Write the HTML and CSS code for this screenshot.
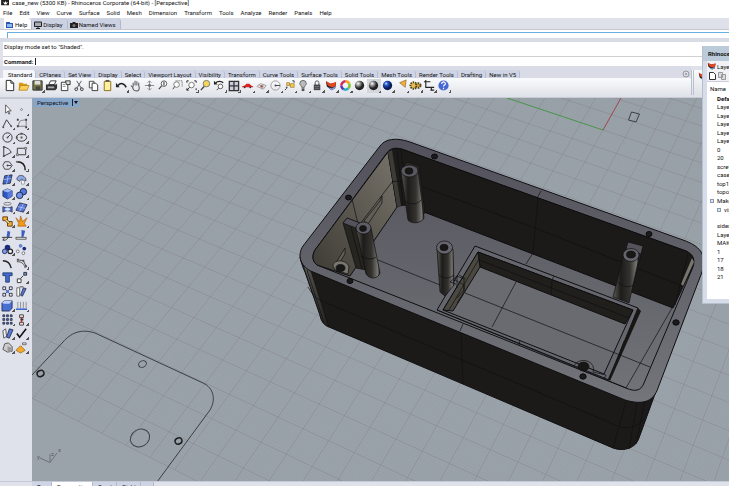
FILE: index.html
```html
<!DOCTYPE html>
<html lang="en">
<head>
    <meta charset="UTF-8">
    <meta name="viewport" content="width=device-width, initial-scale=1.0">
    <title>case_new - Rhinoceros Corporate</title>
    <link rel="stylesheet" href="styles.css">
</head>
<body>
<div class="app">
    <header class="titlebar">
        <svg class="logo" viewBox="0 0 10 8"><path d="M0 0h9v6H0z" fill="#222"/><path d="M2 2l2 1 1-2 1 2 2-1-2 3H4z" fill="#fff"/></svg>
        <span>case_new (5300 KB) - Rhinoceros Corporate (64-bit) - [Perspective]</span>
    </header>
    <nav class="menu">
        <a href="#">File</a><a href="#">Edit</a><a href="#">View</a><a href="#">Curve</a><a href="#">Surface</a><a href="#">Solid</a><a href="#">Mesh</a><a href="#">Dimension</a><a href="#">Transform</a><a href="#">Tools</a><a href="#">Analyze</a><a href="#">Render</a><a href="#">Panels</a><a href="#">Help</a>
    </nav>

    <div class="dock-tabs">
        <button class="dock-tab active"><svg viewBox="0 0 8 8"><path d="M0 1h7v6H0z" fill="#2c55b5"/><path d="M1 3h5v3H1z" fill="#8db7f0"/><path d="M4 1h3v1H4z" fill="#fff"/></svg>Help</button>
        <button class="dock-tab"><svg viewBox="0 0 8 8"><path d="M.5 1h7v4.500h-7z" fill="#aab" stroke="#222"/><path d="M2 7.500h4M4 5v2" stroke="#222"/></svg>Display</button>
        <button class="dock-tab"><svg viewBox="0 0 8 8"><path d="M0 2h2l1-1h2l1 1h2v5H0z" fill="#222"/><circle cx="4" cy="4.500" r="1.500" fill="#777"/></svg>Named Views</button>
    </div>
    <div class="help-pane"><div class="help-box"></div></div>

    <div class="history">Display mode set to "Shaded".</div>
    <div class="command">
        <label for="cmd">Command:</label>
        <span class="caret"></span>
        <input type="text" id="cmd">
    </div>

    <div class="tools">
    <div class="tools-main">
    <div class="tool-tabs">
        <button class="tool-tab active">Standard</button>
        <button class="tool-tab">CPlanes</button>
        <button class="tool-tab">Set View</button>
        <button class="tool-tab">Display</button>
        <button class="tool-tab">Select</button>
        <button class="tool-tab">Viewport Layout</button>
        <button class="tool-tab">Visibility</button>
        <button class="tool-tab">Transform</button>
        <button class="tool-tab">Curve Tools</button>
        <button class="tool-tab">Surface Tools</button>
        <button class="tool-tab">Solid Tools</button>
        <button class="tool-tab">Mesh Tools</button>
        <button class="tool-tab">Render Tools</button>
        <button class="tool-tab">Drafting</button>
        <button class="tool-tab">New in V5</button>
        <button class="gear" aria-label="Options"><svg viewBox="0 0 8 8"><circle cx="4" cy="4" r="3" fill="none" stroke="#999"/><circle cx="4" cy="4" r="1" fill="#999"/></svg></button>
    </div>
    <div class="toolbar">
        <button aria-label="New"><svg viewBox="0 0 14 14"><path d="M3.500 1.500h5l3 3v8h-8zM8.500 1.500v3h3" fill="#fff" stroke="#222"/></svg></button>
        <button aria-label="Open"><svg viewBox="0 0 14 14"><path d="M2 4h4l1 1h4v7H2z" fill="#d99a14"/><path d="M4 7h9l-2 5H2z" fill="#ffd057" stroke="#9a6a10" stroke-width=".6"/></svg></button>
        <button class="flyout" aria-label="Save"><svg viewBox="0 0 14 14"><path d="M2 2h10v10H2z" fill="#777745" stroke="#333"/><path d="M4 2h6v4H4z" fill="#ddd"/><path d="M5 8h5v4H5z" fill="#444"/></svg></button>
        <button aria-label="Print"><svg viewBox="0 0 14 14"><path d="M4 6l2-4h6l-2 4z" fill="#fff" stroke="#333"/><path d="M1 6h11l1-1v5l-2 2H1z" fill="#333"/><path d="M3 8h7v2H3z" fill="#aaa"/></svg></button>
        <button aria-label="Properties"><svg viewBox="0 0 14 14"><path d="M2.500 3.500h7v9h-7z" fill="#fff" stroke="#333"/><path d="M7 2h5v4H8z" fill="#ddd" stroke="#333"/><path d="M4 6h3M4 8h3" stroke="#888"/></svg></button>
        <button aria-label="Cut"><svg viewBox="0 0 14 14"><path d="M4 2l5 8M9 2l-5 8" stroke="#555" fill="none"/><circle cx="3.500" cy="11" r="1.500" fill="none" stroke="#333"/><circle cx="9.500" cy="11" r="1.500" fill="none" stroke="#333"/></svg></button>
        <button aria-label="Copy"><svg viewBox="0 0 14 14"><path d="M2.500 2.500h5v7h-5z" fill="#fff" stroke="#444"/><path d="M5.500 4.500h4l2 2v6h-6z" fill="#fff" stroke="#333"/></svg></button>
        <button aria-label="Paste"><svg viewBox="0 0 14 14"><path d="M3.500 2.500h7v10h-7z" fill="#fff0a0" stroke="#8b6d14"/><path d="M5 1h4v2H5z" fill="#555"/></svg></button>
        <button class="flyout" aria-label="Undo"><svg viewBox="0 0 14 14"><path d="M3 7c3-3 7-3 9 2" stroke="#222" stroke-width="1.600" fill="none"/><path d="M1 4v5h4z" fill="#222"/></svg></button>
        <button aria-label="Pan"><svg viewBox="0 0 14 14"><path d="M4.500 8V4M6.500 7V2M8.500 7V2.500M10.500 8V4M4 9L2 7M4 8c0 3 1 5 4 5s3-2 3-5" stroke="#555" stroke-width="1.100" fill="none"/></svg></button>
        <button aria-label="Rotate view"><svg viewBox="0 0 14 14"><path d="M7 2v10M2 7h10M5 4l2-2 2 2M5 10l2 2 2-2" stroke="#888" fill="none"/><circle cx="7" cy="7" r="1.500" fill="#666"/></svg></button>
        <button aria-label="Zoom"><svg viewBox="0 0 14 14"><circle cx="7.500" cy="5" r="3" fill="#fff" stroke="#555"/><path d="M5 7.500L2 11M7.500 3v4" stroke="#444" stroke-width="1.200"/></svg></button>
        <button aria-label="Zoom window"><svg viewBox="0 0 14 14"><circle cx="6" cy="6" r="3" fill="#fff" stroke="#777"/><path d="M4 8l-2 3" stroke="#444"/><path d="M5 2h7v7" stroke="#444" stroke-dasharray="1 1" fill="none"/></svg></button>
        <button class="flyout" aria-label="Zoom extents"><svg viewBox="0 0 14 14"><circle cx="7" cy="6.500" r="3" fill="#fff" stroke="#777"/><path d="M2 4V2h2M10 2h2v2M12 10v2M2 10v2h2M5 9l-3 3" stroke="#222" fill="none"/></svg></button>
        <button aria-label="Zoom selected"><svg viewBox="0 0 14 14"><circle cx="8" cy="5" r="3.500" fill="#f4d65a" stroke="#777"/><path d="M5.500 8L2 12" stroke="#444" stroke-width="1.500"/></svg></button>
        <button class="flyout" aria-label="Undo view"><svg viewBox="0 0 14 14"><path d="M3 4c2-2 6-2 8 0" stroke="#222" stroke-width="1.500" fill="none"/><path d="M1 2v4h4z" fill="#222"/><circle cx="8" cy="8" r="2.500" fill="#fff" stroke="#555"/><path d="M6 10l-2 2" stroke="#333"/></svg></button>
        <button class="flyout" aria-label="Four views"><svg viewBox="0 0 14 14"><path d="M2.500 2.500h10v10h-10zM7.500 2v10M2 7.500h10" fill="#ccd" stroke="#333" stroke-width="1.400"/></svg></button>
        <button class="flyout" aria-label="Car view"><svg viewBox="0 0 14 14"><path d="M1 8l3-1 2-2h3l2 2 2 1v1H1z" fill="#d22"/><circle cx="4" cy="9" r="1" fill="#333"/><circle cx="10" cy="9" r="1" fill="#333"/></svg></button>
        <button class="flyout" aria-label="Set CPlane"><svg viewBox="0 0 14 14"><path d="M2 8l4-3 6 2-3 4zM4 6l6 3M7 11l2-5" fill="none" stroke="#999"/><circle cx="7" cy="8" r="1.200" fill="#b33"/></svg></button>
        <button class="flyout" aria-label="Object snap"><svg viewBox="0 0 14 14"><circle cx="7" cy="7" r="5" fill="none" stroke="#999"/><path d="M7 7h5" stroke="#444"/><circle cx="7" cy="7" r="1" fill="#444"/></svg></button>
        <button class="flyout" aria-label="Select"><svg viewBox="0 0 14 14"><path d="M4 4h3v3H4zM8 5h4v4H8z" fill="#f7cf4a" stroke="#96702a" stroke-width=".7"/><path d="M10 2h2v2M4 10l-2 2" stroke="#333" fill="none"/><circle cx="4" cy="9" r="1" fill="#555"/></svg></button>
        <button class="flyout" aria-label="Hide"><svg viewBox="0 0 14 14"><path d="M5 9c0-2-2-2-2-4a3.500 3.500 0 0 1 7 0c0 2-2 2-2 4z" fill="#bbb" stroke="#666"/><path d="M5 10h3v3H5z" fill="#555"/></svg></button>
        <button class="flyout" aria-label="Lock"><svg viewBox="0 0 14 14"><path d="M4.500 7V4a2 2 0 0 1 4 0v3" fill="none" stroke="#555"/><path d="M3 6h7v6H3z" fill="#444"/><path d="M4 8h5M4 10h5" stroke="#999" stroke-width=".6"/></svg></button>
        <button class="flyout" aria-label="Layers"><svg viewBox="0 0 14 14"><path d="M1 3l5 2 6-1-1 6-4 2-5-4z" fill="#222"/><path d="M1 2l5 3 6-2-1 5-4 1-4-2z" fill="#e6451e"/><path d="M3 9l4 1 4-2v2l-4 2z" fill="#7b93cf"/></svg></button>
        <button class="flyout" aria-label="Color"><svg viewBox="0 0 14 14"><g fill="none" stroke-width="2.600"><path d="M7 2.500a4.500 4.500 0 0 1 4 2.500" stroke="#f3a51b"/><path d="M11 5a4.500 4.500 0 0 1-1 5" stroke="#77c92e"/><path d="M10 10a4.500 4.500 0 0 1-5 1" stroke="#23a9c9"/><path d="M5 11a4.500 4.500 0 0 1-2.500-4" stroke="#5735b5"/><path d="M2.500 7A4.500 4.500 0 0 1 7 2.500" stroke="#d3255c"/></g></svg></button>
        <button aria-label="Shade"><svg viewBox="0 0 14 14"><circle cx="7" cy="7" r="5" fill="url(#ball)"/></svg></button>
        <button class="flyout pressed" aria-label="Shaded viewport"><svg viewBox="0 0 14 14"><circle cx="7" cy="7" r="5" fill="url(#ball)"/></svg></button>
        <button class="flyout" aria-label="Render"><svg viewBox="0 0 14 14"><circle cx="7" cy="7" r="5" fill="url(#blueball)"/></svg></button>
        <button class="flyout" aria-label="Spotlight"><svg viewBox="0 0 14 14"><path d="M5 4l7-3-1 8z" fill="#f2ad3c" stroke="#8a6730" stroke-width=".7"/></svg></button>
        <button class="flyout" aria-label="Options"><svg viewBox="0 0 14 14"><circle cx="5" cy="7" r="3.500" fill="#e1bd51" stroke="#4d421f" stroke-dasharray="1.500 1" stroke-width="2"/><circle cx="10" cy="7" r="2.500" fill="#d1a532" stroke="#4d421f" stroke-dasharray="1.500 1" stroke-width="2"/></svg></button>
        <button class="flyout" aria-label="Dimension"><svg viewBox="0 0 14 14"><path d="M3 3h5M3 3v6h6v3M1 3h3M3 1v3M9 9h3M8 12h4" fill="none" stroke="#222" stroke-width="1.200"/></svg></button>
        <button class="flyout" aria-label="Help"><svg viewBox="0 0 14 14"><circle cx="7" cy="7" r="5.500" fill="#4767d2"/><path d="M5 5.500c0-3 4-3 4-.5 0 1.500-2 1.500-2 3M7 9.500v1.500" fill="none" stroke="#fff" stroke-width="1.300"/></svg></button>
    </div>
    </div>
    <div class="tools-extra">
        <button aria-label="Layer tools"><svg viewBox="0 0 14 14"><path d="M1 3l5 2 6-1-1 6-4 2-5-4z" fill="#222"/><path d="M1 2l5 3 6-2-1 5-4 1-4-2z" fill="#e6451e"/><path d="M3 9l4 1 4-2v2l-4 2z" fill="#7b93cf"/></svg></button>
    </div>
    </div>

    <main class="work">
        <aside class="side">
            <button aria-label="Pointer"><svg viewBox="0 0 14 14"><path d="M5 2v9l2-2 1.500 3 1-.5L8 8.500h3z" fill="#fff" stroke="#333" stroke-width=".8"/></svg></button>
            <button class="flyout" aria-label="Point"><svg viewBox="0 0 14 14"><circle cx="7" cy="7" r="1" fill="#fff" stroke="#555" stroke-width=".7"/></svg></button>
            <button class="flyout" aria-label="Polyline"><svg viewBox="0 0 14 14"><path d="M2 11l4-8 5 7" fill="none" stroke="#333"/><circle cx="2.500" cy="11" r="1" fill="#555"/><circle cx="11" cy="10" r="1" fill="#555"/></svg></button>
            <button class="flyout" aria-label="Curve"><svg viewBox="0 0 14 14"><path d="M3 10c3-6 0-6 9-7M3 10h8M12 3v8" fill="none" stroke="#666" stroke-width=".8"/><path d="M2 2h2v2H2zM11 2h2v2h-2zM2 9h2v2H2zM11 10h2v2h-2z" fill="#444"/></svg></button>
            <button class="flyout" aria-label="Circle"><svg viewBox="0 0 14 14"><circle cx="7" cy="7" r="5" fill="none" stroke="#333"/><path d="M7 7l3-3" stroke="#333"/><circle cx="7" cy="7" r="1" fill="#555"/></svg></button>
            <button class="flyout" aria-label="Ellipse"><svg viewBox="0 0 14 14"><ellipse cx="7" cy="7" rx="5.500" ry="4" fill="none" stroke="#333"/><path d="M6 2h2v2H6zM6 6h2v2H6zM1 6h2v2H1z" fill="#555"/></svg></button>
            <button class="flyout" aria-label="Arc"><svg viewBox="0 0 14 14"><path d="M3 12V2c4 1 7 3 8 6l-8 4" fill="none" stroke="#333"/><path d="M2 1h2v2H2zM2 11h2v2H2z" fill="#555"/></svg></button>
            <button class="flyout" aria-label="Rectangle"><svg viewBox="0 0 14 14"><path d="M2.500 3.500h9v7h-9z" fill="none" stroke="#333"/><path d="M1.500 9.500h2v2h-2zM10.500 2.500h2v2h-2z" fill="#eee" stroke="#444" stroke-width=".7"/></svg></button>
            <button class="flyout" aria-label="Polygon"><svg viewBox="0 0 14 14"><path d="M4 3h5l3 4-3 4H4L2 7z" fill="none" stroke="#444"/><path d="M7 7h4" stroke="#444"/><circle cx="7" cy="7" r="1" fill="#444"/></svg></button>
            <button class="flyout" aria-label="Fillet"><svg viewBox="0 0 14 14"><path d="M2 3c6 0 9 3 9 9" fill="none" stroke="#222" stroke-width="1.600"/><path d="M1 2h2v2H1z" fill="#777"/></svg></button>
            <button class="flyout" aria-label="Surface"><svg viewBox="0 0 14 14"><path d="M4 3l8-1-2 9-8 1z" fill="#3f65c8" stroke="#223" stroke-width=".8"/><path d="M3 7l8-1M8 2L6 12" stroke="#cdd9ff" stroke-width=".7"/></svg></button>
            <button class="flyout" aria-label="Sweep"><svg viewBox="0 0 14 14"><path d="M2 7c0-6 9-6 10 1l-3 1c0-3-3-3-4 0z" fill="#8da9e7" stroke="#334" stroke-width=".8"/><path d="M7 8h3v4H7z" fill="#fff" stroke="#667" stroke-width=".6"/></svg></button>
            <button class="flyout" aria-label="Box"><svg viewBox="0 0 14 14"><path d="M2 4l5-2 5 2v6l-5 3-5-3z" fill="#2d55c4" stroke="#1b2447" stroke-width=".7"/><path d="M2 4l5-2 5 2-5 2z" fill="#9cb6f5"/><path d="M7 6l5-2v6l-5 3z" fill="#5578da"/></svg></button>
            <button class="flyout" aria-label="Boolean union"><svg viewBox="0 0 14 14"><circle cx="9" cy="5" r="3.500" fill="#5578da" stroke="#1b2447"/><circle cx="5" cy="9" r="3.500" fill="#6f91e8" stroke="#1b2447"/></svg></button>
            <button class="flyout" aria-label="Project"><svg viewBox="0 0 14 14"><path d="M2 6c3 2 7 2 10 0v6c-3-2-7-2-10 0z" fill="#4a70d3" stroke="#223" stroke-width=".7"/><ellipse cx="7" cy="3" rx="4" ry="1.500" fill="none" stroke="#777"/><ellipse cx="7" cy="9" rx="3" ry="1.500" fill="#dce5ff"/></svg></button>
            <button class="flyout" aria-label="Mesh"><svg viewBox="0 0 14 14"><path d="M5 2l8 2-4 8-8-2z" fill="#5578da" stroke="#223" stroke-width=".8"/><path d="M3 6l8 2M9 3l-4 8" stroke="#cdd9ff" stroke-width=".7"/></svg></button>
            <button class="flyout" aria-label="Join"><svg viewBox="0 0 14 14"><path d="M2 2h5v4H2zM7 7h5v5H7z" fill="#f3b233" stroke="#63400c"/><path d="M5 5l4 4" stroke="#63400c" stroke-width="3"/><path d="M5 5l4 4" stroke="#f3d79a" stroke-width="1.500"/></svg></button>
            <button class="flyout" aria-label="Explode"><svg viewBox="0 0 14 14"><path d="M1 3l4 4 1-6 2 6 5-4-3 6 2 3H3l1-3z" fill="#f19a1c" stroke="#a55b0b" stroke-width=".7"/></svg></button>
            <button aria-label="Trim"><svg viewBox="0 0 14 14"><path d="M7 2l3 1-1 6H6z" fill="#3b5fc0"/><path d="M1 9h11M4 9l-2 3h3l3-3" fill="none" stroke="#333"/></svg></button>
            <button aria-label="Split"><svg viewBox="0 0 14 14"><path d="M7 1l4 1-2 7H7z" fill="#3b5fc0"/><path d="M1 9h11v2H1z" fill="#eee" stroke="#333" stroke-width=".8"/></svg></button>
            <button class="flyout" aria-label="Group"><svg viewBox="0 0 14 14"><circle cx="7" cy="5" r="3" fill="#1a2d76"/><circle cx="4" cy="9" r="2.500" fill="#8a9ad4" stroke="#1a2d76"/><circle cx="10" cy="9" r="2.500" fill="#eee" stroke="#223" stroke-width="1.300"/></svg></button>
            <button aria-label="Ungroup"><svg viewBox="0 0 14 14"><circle cx="6" cy="3" r="2" fill="#6a83d0"/><circle cx="3" cy="9" r="1.500" fill="#fff" stroke="#444" stroke-width=".7"/><circle cx="10" cy="6" r="2" fill="#1a2d76"/><circle cx="9" cy="11" r="1.500" fill="#fff" stroke="#444" stroke-width=".7"/></svg></button>
            <button aria-label="Edit points"><svg viewBox="0 0 14 14"><path d="M2 4c6 0 8 3 9 8" fill="none" stroke="#222" stroke-width="1.500"/></svg></button>
            <button class="flyout" aria-label="Control points"><svg viewBox="0 0 14 14"><path d="M2 5c6 0 8 3 9 7M3 3l6 1 3 6" fill="none" stroke="#444"/><path d="M2 2h2v2H2zM8 3h2v2H8zM11 9h2v2h-2z" fill="#555"/></svg></button>
            <button aria-label="Text"><svg viewBox="0 0 14 14"><path d="M2 2h10v3H9v7H5V5H2z" fill="#3f6bd0" stroke="#1b2c5c" stroke-width=".8"/></svg></button>
            <button class="flyout" aria-label="Move"><svg viewBox="0 0 14 14"><path d="M2.500 8.500h4v4h-4z" fill="#fff" stroke="#333"/><path d="M9.500 1.500h3v3h-3z" fill="#7693df" stroke="#333"/><path d="M6 8l3-3" stroke="#333"/></svg></button>
            <button aria-label="Copy objects"><svg viewBox="0 0 14 14"><path d="M4 4l6 6M10 4l-6 6" stroke="#333"/><path d="M2 2h3v3H2zM9 2h3v3H9zM2 9h3v3H2zM9 9h3v3H9z" fill="#eef" stroke="#223" stroke-width=".9"/><path d="M5.500 5.500h3v3h-3z" fill="#5578da"/></svg></button>
            <button aria-label="Rotate"><svg viewBox="0 0 14 14"><path d="M2 3h3v9H2z" fill="#fff" stroke="#444" stroke-width=".8"/><path d="M9 3l3 1-4 8-2-1z" fill="#5578da" stroke="#223" stroke-width=".8"/><path d="M5 2h4" stroke="#444"/></svg></button>
            <button class="flyout" aria-label="Solid edit"><svg viewBox="0 0 14 14"><path d="M1 4l3-2h8v8l-3 3H1z" fill="#486ed0" stroke="#1b2447" stroke-width=".8"/><path d="M1 4l3-2h8L9 5H3z" fill="#bdcff8"/></svg></button>
            <button class="flyout" aria-label="Extrude"><svg viewBox="0 0 14 14"><path d="M3 3v7M6 3v7M9 3v7M12 3v7" stroke="#777" stroke-width=".8"/><path d="M1 11h12" stroke="#3a62cb" stroke-width="1.600"/></svg></button>
            <button class="flyout" aria-label="Array"><svg viewBox="0 0 14 14"><path d="M2 2h2v2H2zM6 2h2v2H6zM10 2h2v2h-2zM2 6h2v2H2zM6 6h2v2H6zM10 6h2v2h-2zM2 10h2v2H2zM6 10h2v2H6zM10 10h2v2h-2z" fill="#5578da" stroke="#223" stroke-width=".8"/></svg></button>
            <button class="flyout" aria-label="Align"><svg viewBox="0 0 14 14"><path d="M5 2h4v3H5zM5 10h4v3H5z" fill="#fff" stroke="#333"/><path d="M7 4v7" stroke="#c33" stroke-width="1.500"/><path d="M6 6h3v2H6z" fill="#333"/></svg></button>
            <button class="flyout" aria-label="Flow"><svg viewBox="0 0 14 14"><path d="M2 4l3-2 1 8-3 2z" fill="#eee" stroke="#333" stroke-width=".8"/><path d="M9 2l4 1-4 9-3-1z" fill="#5578da" stroke="#223" stroke-width=".8"/></svg></button>
            <button class="flyout" aria-label="Check"><svg viewBox="0 0 14 14"><path d="M2 7l3 4 7-9" fill="none" stroke="#111" stroke-width="1.700"/></svg></button>
            <button class="flyout" aria-label="Block"><svg viewBox="0 0 14 14"><path d="M2 9l2-6 4-1 4 4v5l-5 1z" fill="#ccc" stroke="#555"/><path d="M7 6l4 1v5l-4-1z" fill="#999"/></svg></button>
            <button class="flyout" aria-label="Analyze"><svg viewBox="0 0 14 14"><path d="M1 10l5-5 5 5-5 3z" fill="#f2a92c" stroke="#8a5c10" stroke-width=".7"/><path d="M8 2h4v2H8z" fill="#ddd" stroke="#555" stroke-width=".8"/></svg></button>
        </aside>

        <section class="viewport">
            <svg class="scene" viewBox="32 98 697 384" preserveAspectRatio="xMinYMin slice">
                <defs>
                    <radialGradient id="ball" cx=".35" cy=".3"><stop offset="0" stop-color="#fff"/><stop offset=".5" stop-color="#888"/><stop offset="1" stop-color="#222"/></radialGradient>
                    <radialGradient id="blueball" cx=".35" cy=".3"><stop offset="0" stop-color="#cfe0ff"/><stop offset=".4" stop-color="#2458c9"/><stop offset="1" stop-color="#0b1c57"/></radialGradient>
                    <linearGradient id="rim" x1="0" y1="0" x2="0" y2="1"><stop offset="0" stop-color="#52515b"/><stop offset="1" stop-color="#74757b"/></linearGradient>
                    <linearGradient id="floor" x1="0" y1="0" x2="0" y2="1"><stop offset="0" stop-color="#55545d"/><stop offset="1" stop-color="#717278"/></linearGradient>
                    <linearGradient id="leftwall" x1="1" y1="0" x2="0" y2="1"><stop offset="0" stop-color="#77736a"/><stop offset="1" stop-color="#3e3b35"/></linearGradient>
                    <linearGradient id="post"><stop offset="0" stop-color="#5d5b55"/><stop offset=".3" stop-color="#1d1c1a"/><stop offset=".65" stop-color="#33322f"/><stop offset=".9" stop-color="#77756f"/><stop offset="1" stop-color="#222"/></linearGradient>
                    <linearGradient id="corner"><stop offset="0" stop-color="#65635c"/><stop offset="1" stop-color="#1c1b19"/></linearGradient>
                </defs>
                <g id="grid"></g>
                <path d="M507 98L603 130" class="axis-y"/>
                <path d="M603 130L621 98" class="axis-x"/>

                <!-- flat curves on the ground plane -->
                <g class="curve">
                    <path d="M32 375L63 342C70 334 80 328 95 333L203 383C214 388 216 400 210 410L157 482"/>
                    <ellipse cx="142.500" cy="364" rx="4" ry="3.200" transform="rotate(-25 142.500 364)"/>
                    <ellipse cx="140" cy="438" rx="10" ry="8.500" transform="rotate(-30 140 438)"/>
                    <ellipse class="bold" cx="40.500" cy="373.500" rx="3.500" ry="3" transform="rotate(-25 40.500 373.500)"/>
                    <ellipse class="bold" cx="178.500" cy="441" rx="3.500" ry="3" transform="rotate(-25 178.500 441)"/>
                    <path d="M631.500 112L639.500 114L636 122L628.500 120Z"/>
                </g>
                <g class="gizmo"><path d="M50 462.500L40 458M50 462.500V454M50 462.500L57 453"/><text x="37" y="459">y</text><text x="51" y="456">z</text><text x="58" y="452">x</text></g>

                <!-- outer walls -->
                <path class="edge" fill="#1b1a18" d="M300 257C301 262 303 268 305 272L320 315C321 321 324 325 329 327L613 448C624 452 636 448 639 438L655 394L636 380L320 250Z"/>
                <path fill="url(#corner)" d="M301 259L320 315C321 321 324 325 329 327L311 271Z"/>
                <path class="line" d="M301 259L320 315C321 321 324 325 329 327L311 271M307 270L324 323M308 287C312 294 316 299 322 301L460 359L620 427C630 429 638 426 643 420M461 332L463 384M626 402L613 448M637 403L629 449M645 401L636 444"/>

                <!-- rim and cavity -->
                <path class="edge" fill="url(#rim)" d="M303 246L380 146C385 139 396 137 410 142L683 240C700 246 707 254 702 272L658 388C654 400 645 406 625 400L313 272C300 267 297 255 303 246Z"/>
                <path class="edge" fill="url(#floor)" d="M315 250L386 154C390 148 396 146 407 151L686 251C694 255 695 260 693 267L644 383C641 391 635 392 626 388L317 265C312 261 312 255 315 250Z"/>
                <path class="edge" fill="url(#leftwall)" d="M315 250L388 152L397 207L350 276L317 265C312 261 312 255 315 250Z"/>
                <path class="edge" fill="#1b1a18" d="M388 152C392 147 400 148 407 151L686 251C694 255 695 260 692 268L673 308L424 212C414 206 405 203 397 207Z"/>
                <path fill="#3d3b36" d="M388 152L392 150L401 206L397 207Z"/>
                <path fill="#77756d" d="M692 258L694 262L683 286L681 284Z"/>
                <path class="line" d="M397 149L403 204M401 150L407 205M392 182L397 181L420 186L535 228L682 286M538 198L533 253L526 264M688 254L675 305M541 191L537 198M352 199L359 228M392 182L351 236M672 308L626 388"/>
                <path class="line" d="M364 221L380 201L382 196L382 203L368 224ZM334 266L345 248L345 254L338 265Z" fill="#625e55"/>

                <!-- floor lines and the display frame -->
                <path class="line" d="M378 260L440 285"/>
                <path class="edge" fill="#66666e" d="M475 246L638 308L609 380L437 310Z"/>
                <path fill="#171614" d="M638 308L641 311L610 381L608 379Z"/>
                <path class="edge" fill="#6a6a71" d="M478 252L633 310L604 374L443 310Z"/>
                <path class="edge" fill="#201f1c" d="M478 252L633 310L625 324L480 267Z"/>
                <path class="edge" fill="#4b4840" d="M478 252L480 267L453 311L443 310Z"/>
                <path class="line" d="M479 260L629 318M479 259L449 310M552 280L551 294M465 293L650 367M516 282L492 327M437 310L626 388M520 340L519 345M463 324L460 331M624 341L620 353M554 276L552 280M455 280L464 285L464 292L457 303M459 275L466 279"/>

                <!-- screw posts -->
                <g class="line">
                    <path d="M404 164L408 162L419 166L425 213L420 217Z" fill="#2a2926"/>
                    <path d="M401 172L408 220C411 224 421 224 424 218L418 170Z" fill="url(#post)"/>
                    <path d="M405 201C409 205 417 205 421 200" fill="none"/>
                    <ellipse cx="409.500" cy="171" rx="8.500" ry="6" fill="#595861"/><ellipse cx="409" cy="171" rx="4" ry="3.200" fill="#181715"/>

                    <path d="M343 223L347 218L360 223L371 271L356 268Z" fill="#26251f"/>
                    <path d="M343 223L347 218L360 223L356 228Z" fill="#54535b"/>
                    <path d="M351 227L362 269" fill="none"/>
                    <path d="M356 229L366 274C370 280 378 279 380 273L371 228Z" fill="url(#post)"/>
                    <path d="M361 256C365 259 373 260 376 257" fill="none"/>
                    <ellipse cx="363.500" cy="228" rx="7.500" ry="6" fill="#5e5d66"/><ellipse cx="363" cy="228.500" rx="3.500" ry="3" fill="#181715"/>

                    <path d="M437 249L440 292L445 296L454 285L453 249Z" fill="url(#post)"/>
                    <path d="M439 275C443 279 449 279 454 275" fill="none"/>
                    <ellipse cx="444.500" cy="247.500" rx="8" ry="6.500" fill="#66656d"/><ellipse cx="444" cy="247.500" rx="4" ry="3.200" fill="#181715"/>
                    <path d="M450 282L457 276L464 279L464 290L457 298M450 282L456 284M457 276L457 288" fill="none"/>

                    <path d="M628 242L643 246L640 259L631 292Z" fill="#2a2926"/>
                    <path d="M628 242L643 246L641 254L626 249Z" fill="#54535b"/>
                    <path d="M623 257L613 297L629 303L639 258Z" fill="url(#post)"/>
                    <path d="M618 282C622 287 629 288 633 285" fill="none"/>
                    <ellipse cx="631" cy="255" rx="8" ry="6.500" fill="#66656d"/><ellipse cx="631" cy="254.500" rx="4.500" ry="3.500" fill="#181715"/>

                    <path d="M574 366A10 8.500 0 1 1 593 372" fill="none"/><path d="M593 372L606 375L604 379" fill="none"/>
                    <ellipse cx="583.500" cy="366.500" rx="5.500" ry="4.500" fill="#181715"/>
                    <path d="M333 266C333 259 347 259 349 267L348 274L335 270Z" fill="#77766f"/><ellipse cx="340.500" cy="268" rx="4.500" ry="3.500" fill="#181715"/>
                </g>
                <g class="hole">
                    <ellipse cx="434.500" cy="156.500" rx="3" ry="2.500"/><ellipse cx="348.500" cy="197.500" rx="3" ry="2.500"/><ellipse cx="350" cy="281" rx="3" ry="2.500"/>
                    <ellipse cx="649" cy="234" rx="3" ry="2.500"/><ellipse cx="676" cy="322.500" rx="3.200" ry="2.700"/><ellipse cx="583" cy="376.500" rx="3.200" ry="2.700"/>
                </g>
            </svg>
            <button class="view-title">Perspective<span class="view-arrow"></span></button>
        </section>
    </main>

    <footer class="view-tabs">
        <button>Top</button><button class="active">Perspective</button><button>Front</button><button>Right</button><button>+</button>
    </footer>

    <div class="layers">
        <div class="layers-title">Rhinoceros</div>
        <div class="layers-tab"><svg viewBox="0 0 14 14"><path d="M1 3l5 2 6-1-1 6-4 2-5-4z" fill="#222"/><path d="M1 2l5 3 6-2-1 5-4 1-4-2z" fill="#e6451e"/><path d="M3 9l4 1 4-2v2l-4 2z" fill="#7b93cf"/></svg>Layers</div>
        <div class="layers-tools">
            <button aria-label="New layer"><svg viewBox="0 0 10 10"><path d="M2.500 1.500h4l2 2v5h-6z" fill="#fff" stroke="#333"/></svg></button>
            <button aria-label="New sublayer"><svg viewBox="0 0 10 10"><path d="M1.500 1.500h4v5h-4zM4.500 3.500h4v5h-4z" fill="#ddd" stroke="#999"/></svg></button>
        </div>
        <div class="layers-head">Name</div>
        <ul>
            <li class="current">Default</li>
            <li>Layer 01</li>
            <li>Layer 02</li>
            <li>Layer 03</li>
            <li>Layer 04</li>
            <li>Layer 05</li>
            <li>0</li>
            <li>20</li>
            <li>screws</li>
            <li>case1</li>
            <li>top1</li>
            <li>topology</li>
            <li class="parent"><i></i>Make2D</li>
            <li class="parent child"><i></i>visible</li>
            <li></li>
            <li>sides</li>
            <li>Layer 06</li>
            <li>MAKE</li>
            <li>1</li>
            <li>17</li>
            <li>18</li>
            <li>21</li>
        </ul>
    </div>
</div>

<script>
    // construction plane grid, 40 x 40 cells, seen in perspective
    // u runs down-right, v runs towards the viewer, 20 cells = 1 unit
    function project(u, v) {
        const s = u / 20;
        const t = (v + 8) / 20;
        const w = 1 - 0.1177 * s - 0.2462 * t;
        return ((316.2 * s - 303.1 * t + 215.8) / w).toFixed(1) + ' ' + ((113.7 * s + 243.2 * t + 1) / w).toFixed(1);
    }

    function gridPath(step, minor) {
        let d = '';
        for (let i = 0; i <= 40 / step; i++) {
            if (minor && i % 10 === 0) continue;
            const n = i * step;
            d += 'M' + project(n, -28) + 'L' + project(n, 12);
            d += 'M' + project(0, n - 28) + 'L' + project(40, n - 28);
        }
        return d;
    }

    document.getElementById('grid').innerHTML =
        '<path class="minor" d="' + gridPath(0.1, true) + '"/>' +
        '<path class="major" d="' + gridPath(1, false) + '"/>';
</script>
</body>
</html>
```
FILE: styles.css
```css
* {
    box-sizing: border-box;
}
body {
    margin: 0;
    font-family: Roboto, "Liberation Sans", Arial, sans-serif;
    font-size: 6px;
    color: #111;
    background: #dfe2eb;
    overflow: hidden;
}
button {
    font: inherit;
    color: inherit;
    border: none;
    background: none;
    padding: 0;
    margin: 0;
}
svg {
    display: block;
}
.app {
    position: relative;
    display: flex;
    flex-direction: column;
    height: 100vh;
    overflow: hidden;
}
.titlebar {
    display: flex;
    align-items: center;
    gap: 2px;
    height: 7px;
    padding-left: 1px;
    background: #fff;
    line-height: 6px;
}
.titlebar span {
    margin-top: -2px;
}
.logo {
    width: 9px;
    height: 7px;
}
.menu {
    display: flex;
    align-items: center;
    gap: 7px;
    height: 11px;
    padding-left: 3px;
    background: #fff;
}
.menu a {
    color: #111;
    text-decoration: none;
}

/* help / display / named views */
.dock-tabs {
    display: flex;
    align-items: stretch;
    height: 12px;
    padding-left: 4px;
    background: #dfe1ea;
    border-bottom: 1px solid #c5c8cf;
}
.dock-tab {
    display: flex;
    align-items: center;
    gap: 1px;
    padding: 2px 4px 0 2px;
    background: #cdd2e3;
    border-right: 1px solid #b3b9cb;
    border-radius: 0 4px 0 0;
}
.dock-tab.active {
    background: #fff;
}
.dock-tab svg {
    width: 8px;
    height: 8px;
}
.help-pane {
    height: 12px;
    padding: 2px 0 4px 7px;
    background: linear-gradient(#fff 8px, #d8dce5 8px);
}
.help-box {
    height: 6px;
    border-top: 1px solid #66b0e4;
    border-left: 1px solid #66b0e4;
    background: #fff;
}
.history {
    height: 15px;
    margin-left: 3px;
    padding: 1px;
    line-height: 8px;
    background: #fff;
    border-bottom: 1px solid #d0d0d4;
}
.command {
    display: flex;
    align-items: center;
    gap: 2px;
    height: 9px;
    margin-left: 3px;
    padding-left: 1px;
    background: #fff;
}
.command label {
    font-weight: bold;
}
.command input {
    flex: 1;
    height: 7px;
    border: none;
    padding: 0;
    font: inherit;
    background: none;
    outline: none;
}
.caret {
    width: 1px;
    height: 7px;
    background: #222;
}

/* toolbars */
.tools {
    display: flex;
    height: 32px;
    border-bottom: 1px solid #c9ccd6;
}
.tools-main {
    flex: 1;
    min-width: 0;
}
.tools-extra {
    flex: none;
    width: 38px;
    margin: 4px 0 2px;
    padding: 1px 0 0 4px;
    border-left: 3px double #b9bfcc;
    background: linear-gradient(#fafbfc, #dfe1e9);
}
.tools-extra svg {
    width: 11px;
    height: 11px;
}
.tool-tabs {
    display: flex;
    align-items: stretch;
    height: 12px;
    padding: 4px 1px 0 3px;
    background: #d9dce6;
}
.tool-tab {
    padding: 0 3px;
    background: #d0d5e5;
    border-right: 1px solid #b9bfd2;
    border-radius: 0 3px 0 0;
    white-space: nowrap;
}
.tool-tab.active {
    padding-left: 5px;
    background: #f6f7fa;
}
.gear {
    margin-left: auto;
}
.gear svg {
    width: 8px;
    height: 8px;
}
.toolbar {
    display: flex;
    align-items: center;
    height: 19px;
    padding: 0 0 4px 3px;
    background: linear-gradient(#fafbfc, #dfe1e9);
}
.toolbar button,
.side button {
    width: 14px;
    height: 14px;
}
.toolbar svg,
.side svg {
    width: 13px;
    height: 13px;
}
.pressed {
    background-color: #d4d6dc;
}
.flyout {
    background-image: linear-gradient(135deg, transparent 50%, #555 50%);
    background-size: 3px 3px;
    background-position: right bottom;
    background-repeat: no-repeat;
}

.work {
    flex: 1;
    display: flex;
    min-height: 0;
}
.side {
    display: grid;
    grid-template-columns: 14px 14px;
    align-content: start;
    padding: 3px 3px 0 1px;
    border-top: 1px solid #c3c7d2;
}
.viewport {
    position: relative;
    flex: 1;
    min-width: 0;
    background: #9ba3aa;
    overflow: hidden;
}
.scene {
    width: 100%;
    height: 100%;
}
.view-title {
    position: absolute;
    left: 1px;
    top: 0;
    display: flex;
    align-items: center;
    gap: 4px;
    height: 9px;
    padding: 0 1px 0 4px;
    background: #86a7ca;
}
.view-arrow {
    height: 7px;
    padding-left: 1px;
    border-left: 1px solid #223;
}
.view-arrow::after {
    content: "";
    display: block;
    margin-top: 2px;
    border: 2px solid transparent;
    border-top: 3px solid #112;
}

/* drawing */
.minor {
    fill: none;
    stroke: #7d8790;
    stroke-width: .5;
    opacity: .12;
}
.major {
    fill: none;
    stroke: #827f88;
    stroke-width: 1;
    opacity: .45;
}
.axis-y {
    stroke: #4a9a4c;
}
.axis-x {
    stroke: #a04a50;
}
.curve {
    fill: none;
    stroke: #3c4045;
    stroke-width: 1;
}
.curve .bold {
    stroke: #1c1e20;
    stroke-width: 1.5;
}
.gizmo {
    fill: #555b60;
    stroke: none;
    font-size: 6px;
}
.gizmo path {
    fill: none;
    stroke: #6b7278;
}
.edge {
    stroke: #0f0f11;
    stroke-width: 1;
    stroke-linejoin: round;
}
.line {
    stroke: #101012;
    stroke-width: .7;
    stroke-linejoin: round;
}
path.line:not([fill]) {
    fill: none;
}
.hole {
    fill: #1b1b1e;
    stroke: #0c0c0d;
}

.view-tabs {
    display: flex;
    height: 5px;
    padding-left: 32px;
    overflow: hidden;
    border-top: 1px solid #c6cad6;
}
.view-tabs button {
    height: 8px;
    padding: 0 4px 0 5px;
    line-height: 7px;
    background: #d0d5e5;
    border-right: 1px solid #b3b9cb;
}
.view-tabs .active {
    background: #fff;
}

/* floating layers panel, runs off the right edge */
.layers {
    position: absolute;
    top: 46px;
    right: 0;
    width: 27px;
    height: 258px;
    padding: 0 0 4px 4px;
    background: #d7dde8;
    border-left: 1px solid #b6c0cd;
    border-bottom: 1px solid #b6c0cd;
    white-space: nowrap;
    overflow: hidden;
}
.layers-title {
    height: 15px;
    margin-left: -4px;
    padding-left: 5px;
    line-height: 16px;
    font-weight: bold;
    background: #bccbda;
}
.layers-tab,
.layers-tools {
    display: flex;
    align-items: center;
    height: 10px;
    background: #f1f2f6;
}
.layers-tab svg {
    flex: none;
    width: 10px;
    height: 10px;
}
.layers-tools button svg {
    width: 10px;
    height: 10px;
}
.layers-head {
    height: 14px;
    padding-left: 3px;
    line-height: 13px;
    background: #fff;
    border-top: 1px solid #ccd;
}
.layers ul {
    height: 204px;
    margin: 0;
    padding: 0 0 0 10px;
    list-style: none;
    background: #fff;
}
.layers li {
    height: 8px;
    line-height: 8px;
}
.layers li:nth-child(2n) {
    height: 9px;
}
.layers .current {
    font-weight: bold;
}
.layers .parent {
    display: flex;
    align-items: center;
    gap: 3px;
    margin-left: -7px;
}
.layers .child {
    margin-left: 0;
}
.layers i {
    flex: none;
    width: 4px;
    height: 4px;
    border: 1px solid #8a9bb0;
    background: #dce6f2;
}
```
